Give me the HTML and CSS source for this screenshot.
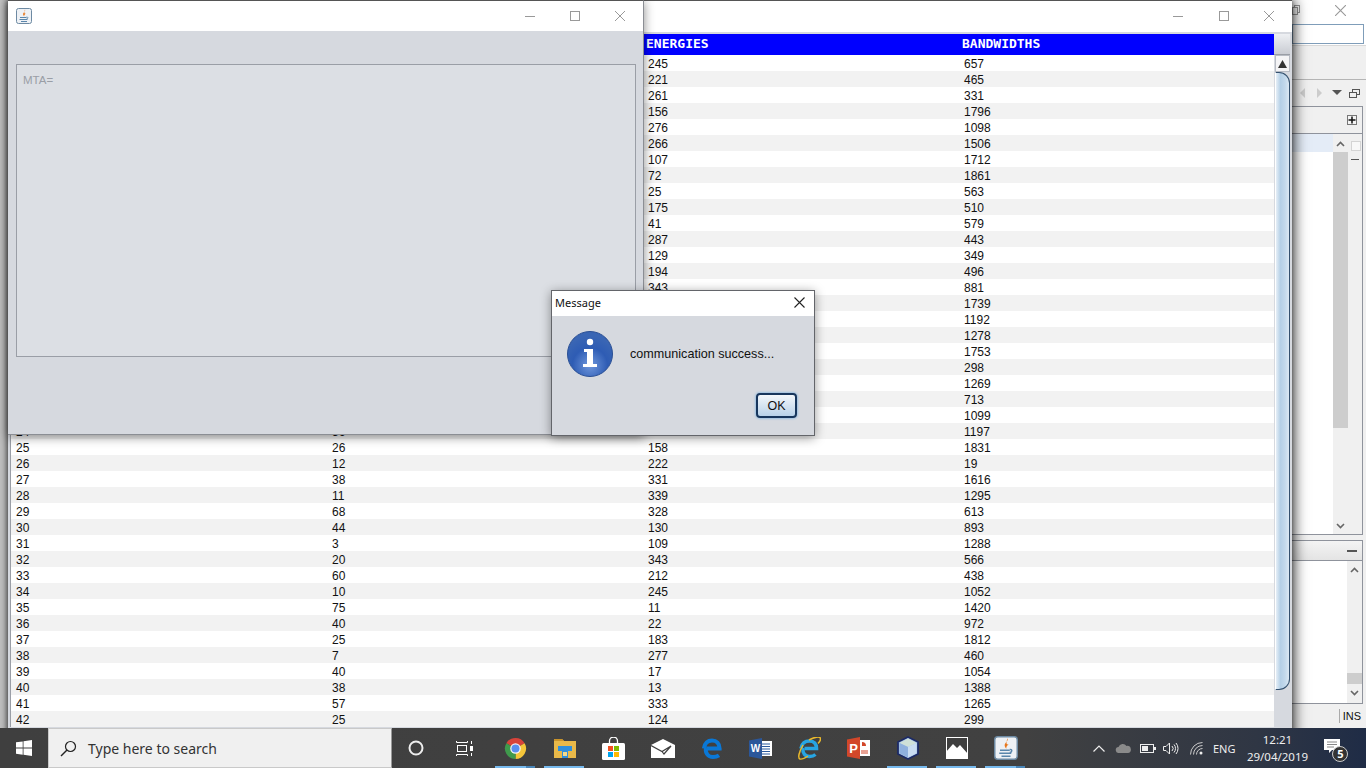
FILE: index.html
```html
<!DOCTYPE html>
<html lang="en">
<head>
    <meta charset="UTF-8">
    <title>communication success</title>
    <link rel="stylesheet" href="styles.css">
</head>
<body>
<svg class="defs" width="0" height="0">
    <symbol id="java" viewBox="0 0 16 16">
        <rect x="0.5" y="0.5" width="15" height="15" rx="2" fill="#eef1f5" stroke="#6d8aa3"/>
        <path d="M9 1.500c1 2-2.500 3-1.800 5.300.2.700.7 1.200 1 1.700-.1-1.300.4-2 1.700-3-1.700.6-2 -.8-.9-4z" fill="#e8781e"/>
        <path d="M4 9.500h6.500M3.500 11.500h8M5 13.500h6" stroke="#5a86ab" stroke-width="1.100" fill="none"/>
        <path d="M10.500 9c1.800-.3 1.800 1.700 0 2" stroke="#5a86ab" fill="none"/>
    </symbol>
    <symbol id="min" viewBox="0 0 10 10"><path d="M0 5.500h10" stroke="#999" fill="none"/></symbol>
    <symbol id="max" viewBox="0 0 10 10"><rect x="0.500" y="0.500" width="9" height="9" stroke="#999" fill="none"/></symbol>
    <symbol id="close" viewBox="0 0 10 10"><path d="M0 0l10 10M10 0L0 10" stroke="#999" fill="none"/></symbol>
    <symbol id="chev-up" viewBox="0 0 9 6"><path d="M1 5l3.500-3.500L8 5" stroke="#666" stroke-width="1.600" fill="none"/></symbol>
    <symbol id="chev-down" viewBox="0 0 9 6"><path d="M1 1l3.500 3.500L8 1" stroke="#666" stroke-width="1.600" fill="none"/></symbol>
</svg>

<div class="desktop">

    <!-- eclipse behind everything -->
    <div class="ide">
        <div class="ide-side">
            <div class="ide-title">
                <svg width="8" height="10" viewBox="0 0 8 10"><rect x="2.500" y="0.500" width="5" height="7" fill="none" stroke="#999"/><rect x="0.500" y="2.500" width="5" height="7" fill="#fff" stroke="#999"/></svg>
                <svg class="ide-close" width="11" height="11"><use href="#close"/></svg>
            </div>
            <div class="ide-search"><div class="search-field"></div></div>
            <div class="ide-tools"></div>
            <div class="ide-viewbar">
                <svg width="74" height="26" viewBox="0 0 74 26">
                    <path d="M13 8v10l-5-5z" fill="#ccc"/>
                    <path d="M25 8v10l5-5z" fill="#ccc"/>
                    <path d="M40 10h10l-5 5z" fill="#555"/>
                    <rect x="60.500" y="9.500" width="7" height="5" fill="none" stroke="#555"/>
                    <rect x="57.500" y="12.500" width="7" height="5" fill="#f0f0f0" stroke="#555"/>
                </svg>
            </div>
            <div class="panel panel-top">
                <div class="panel-head">
                    <svg width="10" height="10" viewBox="0 0 10 10"><rect x="0.500" y="0.500" width="9" height="9" fill="#f4f4f4" stroke="#777"/><path d="M5 1.500v7M1.500 5h7" stroke="#111" stroke-width="1.500"/></svg>
                </div>
                <div class="panel-body">
                    <div class="list"><div class="list-sel"></div></div>
                    <div class="vbar vbar-wide">
                        <svg class="chev" width="9" height="6"><use href="#chev-up"/></svg>
                        <div class="vbar-thumb"></div>
                        <svg class="chev chev-end" width="9" height="6"><use href="#chev-down"/></svg>
                    </div>
                    <div class="rail">
                        <div class="rail-box"></div>
                        <div class="rail-pin"></div>
                    </div>
                </div>
            </div>
            <div class="panel panel-bottom">
                <div class="panel-head panel-head-small"><div class="minus"></div></div>
                <div class="panel-body">
                    <div class="list"></div>
                    <div class="vbar">
                        <svg class="chev" width="9" height="6"><use href="#chev-up"/></svg>
                        <div class="vbar-thumb vbar-thumb-low"></div>
                        <svg class="chev" width="9" height="6"><use href="#chev-down"/></svg>
                    </div>
                </div>
            </div>
            <div class="ide-status"><span class="ins">INS</span></div>
        </div>
    </div>

    <!-- table window -->
    <div class="window table-window">
        <div class="titlebar">
            <div class="title-buttons">
                <svg width="10" height="10"><use href="#min"/></svg>
                <svg width="10" height="10"><use href="#max"/></svg>
                <svg width="10" height="10"><use href="#close"/></svg>
            </div>
        </div>
        <div class="table-body">
            <div class="table-wrap">
                <table class="data">
                    <thead><tr><th></th><th></th><th>ENERGIES</th><th>BANDWIDTHS</th></tr></thead>
                    <tbody>
                        <tr><td>1</td><td></td><td>245</td><td>657</td></tr>
                        <tr><td>2</td><td></td><td>221</td><td>465</td></tr>
                        <tr><td>3</td><td></td><td>261</td><td>331</td></tr>
                        <tr><td>4</td><td></td><td>156</td><td>1796</td></tr>
                        <tr><td>5</td><td></td><td>276</td><td>1098</td></tr>
                        <tr><td>6</td><td></td><td>266</td><td>1506</td></tr>
                        <tr><td>7</td><td></td><td>107</td><td>1712</td></tr>
                        <tr><td>8</td><td></td><td>72</td><td>1861</td></tr>
                        <tr><td>9</td><td></td><td>25</td><td>563</td></tr>
                        <tr><td>10</td><td></td><td>175</td><td>510</td></tr>
                        <tr><td>11</td><td></td><td>41</td><td>579</td></tr>
                        <tr><td>12</td><td></td><td>287</td><td>443</td></tr>
                        <tr><td>13</td><td></td><td>129</td><td>349</td></tr>
                        <tr><td>14</td><td></td><td>194</td><td>496</td></tr>
                        <tr><td>15</td><td></td><td>343</td><td>881</td></tr>
                        <tr><td>16</td><td></td><td></td><td>1739</td></tr>
                        <tr><td>17</td><td></td><td></td><td>1192</td></tr>
                        <tr><td>18</td><td></td><td></td><td>1278</td></tr>
                        <tr><td>19</td><td></td><td></td><td>1753</td></tr>
                        <tr><td>20</td><td></td><td></td><td>298</td></tr>
                        <tr><td>21</td><td></td><td></td><td>1269</td></tr>
                        <tr><td>22</td><td></td><td></td><td>713</td></tr>
                        <tr><td>23</td><td></td><td></td><td>1099</td></tr>
                        <tr><td>24</td><td>36</td><td>207</td><td>1197</td></tr>
                        <tr><td>25</td><td>26</td><td>158</td><td>1831</td></tr>
                        <tr><td>26</td><td>12</td><td>222</td><td>19</td></tr>
                        <tr><td>27</td><td>38</td><td>331</td><td>1616</td></tr>
                        <tr><td>28</td><td>11</td><td>339</td><td>1295</td></tr>
                        <tr><td>29</td><td>68</td><td>328</td><td>613</td></tr>
                        <tr><td>30</td><td>44</td><td>130</td><td>893</td></tr>
                        <tr><td>31</td><td>3</td><td>109</td><td>1288</td></tr>
                        <tr><td>32</td><td>20</td><td>343</td><td>566</td></tr>
                        <tr><td>33</td><td>60</td><td>212</td><td>438</td></tr>
                        <tr><td>34</td><td>10</td><td>245</td><td>1052</td></tr>
                        <tr><td>35</td><td>75</td><td>11</td><td>1420</td></tr>
                        <tr><td>36</td><td>40</td><td>22</td><td>972</td></tr>
                        <tr><td>37</td><td>25</td><td>183</td><td>1812</td></tr>
                        <tr><td>38</td><td>7</td><td>277</td><td>460</td></tr>
                        <tr><td>39</td><td>40</td><td>17</td><td>1054</td></tr>
                        <tr><td>40</td><td>38</td><td>13</td><td>1388</td></tr>
                        <tr><td>41</td><td>57</td><td>333</td><td>1265</td></tr>
                        <tr><td>42</td><td>25</td><td>124</td><td>299</td></tr>
                    </tbody>
                </table>
            </div>
            <div class="scrollcol">
                <div class="scroll-corner"></div>
                <div class="scroll-up"><svg width="9" height="8" viewBox="0 0 9 8"><path d="M4.500 0L9 8H0z" fill="#333"/></svg></div>
                <div class="scroll-thumb"></div>
            </div>
        </div>
    </div>

    <!-- MTA window -->
    <div class="window mta-window">
        <div class="titlebar">
            <svg class="java-icon" width="16" height="16"><use href="#java"/></svg>
            <div class="title-buttons">
                <svg width="10" height="10"><use href="#min"/></svg>
                <svg width="10" height="10"><use href="#max"/></svg>
                <svg width="10" height="10"><use href="#close"/></svg>
            </div>
        </div>
        <div class="mta-body">
            <div class="mta-area">MTA=</div>
        </div>
    </div>

    <!-- message dialog -->
    <div class="dialog">
        <div class="dialog-title">
            <span>Message</span>
            <svg width="11" height="11" viewBox="0 0 11 11"><path d="M.5.5l10 10M10.500.5l-10 10" stroke="#222" stroke-width="1.100" fill="none"/></svg>
        </div>
        <div class="dialog-body">
            <div class="dialog-msg">
                <svg width="46" height="46" viewBox="0 0 46 46">
                    <defs>
                        <radialGradient id="infoBg" cx="50%" cy="75%" r="65%">
                            <stop offset="0" stop-color="#6f97dc"/>
                            <stop offset="0.600" stop-color="#2e5cb4"/>
                            <stop offset="1" stop-color="#3a66b4"/>
                        </radialGradient>
                    </defs>
                    <circle cx="23" cy="23" r="22.500" fill="url(#infoBg)" stroke="#2a4f94"/>
                    <circle cx="23" cy="11" r="3.200" fill="#fff"/>
                    <path d="M17 18h9v15h4v3H16v-3h4V21h-3z" fill="#fff"/>
                </svg>
                <span>communication success...</span>
            </div>
            <div class="dialog-actions"><button class="ok">OK</button></div>
        </div>
    </div>
</div>

<div class="taskbar">
    <div class="start">
        <svg width="16" height="16" viewBox="0 0 16 16"><path d="M0 2.300l6.700-.9v6.200H0zM7.500 1.300L16 0v7.600H7.500zM0 8.400h6.700v6.300L0 13.700zM7.500 8.400H16V16l-8.500-1.200z" fill="#fff"/></svg>
    </div>
    <div class="searchbox">
        <svg width="17" height="17" viewBox="0 0 17 17"><circle cx="10.500" cy="6.500" r="5" fill="none" stroke="#222" stroke-width="1.200"/><path d="M7 10l-6 6" stroke="#222" stroke-width="1.400"/></svg>
        <span>Type here to search</span>
    </div>
    <div class="tb-sys">
        <svg width="16" height="16" viewBox="0 0 16 16"><circle cx="8" cy="8" r="6.500" fill="none" stroke="#eee" stroke-width="2"/></svg>
    </div>
    <div class="tb-sys">
        <svg width="17" height="15" viewBox="0 0 17 15"><path d="M.5 0v1.500h11V0M.5 15v-1.500h11V15M15.500 0v3M15.500 12v3" stroke="#fff" fill="none"/><rect x="1.500" y="4.500" width="9" height="6" fill="none" stroke="#fff"/><rect x="14" y="5" width="3" height="5" fill="#fff"/></svg>
    </div>
    <div class="tb-apps">
        <div class="tb-app running split">
            <svg width="23" height="23" viewBox="0 0 24 24">
                <path d="M12 12L2.470 6.500A11 11 0 0 1 21.530 6.500z" fill="#d8433a"/>
                <path d="M12 12l9.530-5.500A11 11 0 0 1 12 23z" fill="#f5c63a"/>
                <path d="M12 12v11A11 11 0 0 1 2.470 6.500z" fill="#3f9a4c"/>
                <circle cx="12" cy="12" r="5.500" fill="#f4f4f4"/>
                <circle cx="12" cy="12" r="4.200" fill="#5a8ff0"/>
            </svg>
        </div>
        <div class="tb-app running">
            <svg width="22" height="20" viewBox="0 0 22 20">
                <path d="M0 1h8l2 2h12v17H0z" fill="#e9b949"/>
                <path d="M0 1h8l2 2H0z" fill="#c9932a"/>
                <path d="M4 8h14v5h-4v7H8v-7H4z" fill="#2f8fdc"/>
                <rect x="9" y="14" width="4" height="4" fill="#f3d98a"/>
            </svg>
        </div>
        <div class="tb-app">
            <svg width="23" height="23" viewBox="0 0 23 23">
                <path d="M7.500 7V4a4 4 0 0 1 8 0v3" fill="none" stroke="#fff" stroke-width="1.300"/>
                <rect x="0" y="6" width="23" height="17" rx="1.500" fill="#fff"/>
                <rect x="6" y="9" width="5" height="5" fill="#f25022"/>
                <rect x="12" y="9" width="5" height="5" fill="#7fba00"/>
                <rect x="6" y="15" width="5" height="5" fill="#00a4ef"/>
                <rect x="12" y="15" width="5" height="5" fill="#ffb900"/>
            </svg>
        </div>
        <div class="tb-app">
            <svg width="24" height="19" viewBox="0 0 24 19">
                <path d="M0 6L12 0l12 6v13H0z" fill="#fff"/>
                <path d="M0 6.500l11 6L20 7l-7 8-2-2.500" fill="none" stroke="#3f3f3f" stroke-width="1.200"/>
            </svg>
        </div>
        <div class="tb-app">
            <svg width="21" height="21" viewBox="0 0 21 21">
                <path d="M3 10.500C3.500 5 7 2.500 11 2.500c4.500 0 7.500 3 7.500 8H5.500" fill="none" stroke="#0a78d7" stroke-width="4.200"/>
                <path d="M5 10c-1 5 2 9 7 9 2.500 0 4.500-.7 6-1.700" fill="none" stroke="#0a78d7" stroke-width="4"/>
            </svg>
        </div>
        <div class="tb-app">
            <svg width="23" height="21" viewBox="0 0 23 21">
                <rect x="9" y="3" width="14" height="15" fill="#fff"/>
                <path d="M12 6h9M12 8.500h9M12 11h9M12 13.500h9M12 16h9" stroke="#2b5a9e" fill="none"/>
                <path d="M0 2.500L13 0v21L0 18.500z" fill="#2b579a"/>
                <text x="6.500" y="14" class="app-letter">W</text>
            </svg>
        </div>
        <div class="tb-app">
            <svg width="23" height="23" viewBox="0 0 23 23">
                <path d="M3 11.500C3.500 6.500 7 4 11.500 4c4.500 0 7 3 7 7.500H6.500" fill="none" stroke="#27a5e3" stroke-width="3.600"/>
                <path d="M5 11c-.7 5 2 8.500 6.500 8.500 2.500 0 4.500-.7 6-2" fill="none" stroke="#27a5e3" stroke-width="3.400"/>
                <path d="M5 8C1 15-.5 21 2 22c2 .6 5-1 8-3M11 3c5-3 11-4 11.500-1.500.3 1.500-1 3.500-2.500 5" fill="none" stroke="#eab92c" stroke-width="1.500"/>
            </svg>
        </div>
        <div class="tb-app">
            <svg width="23" height="22" viewBox="0 0 23 22">
                <rect x="9" y="3" width="14" height="16" fill="#fff"/>
                <path d="M15 5a4 4 0 0 1 4 4h-4z" fill="#d2472a"/>
                <path d="M14 14h7M14 16h7" stroke="#d2472a" fill="none"/>
                <path d="M0 2.500L13 0v22L0 19.500z" fill="#d2472a"/>
                <text x="6.500" y="15.500" class="app-letter app-letter-big">P</text>
            </svg>
        </div>
        <div class="tb-app running">
            <svg width="22" height="24" viewBox="0 0 22 24">
                <path d="M11 1l10 5v12l-10 5-10-5V6z" fill="#a9c6e8" stroke="#1c2a66" stroke-width="1.800" stroke-linejoin="round"/>
                <path d="M11 2.500L19.500 7 11 11 2.500 7z" fill="#cfe0d8"/>
                <path d="M11 11v10.500l8.500-4.200V7z" fill="#c9dcf2"/>
                <path d="M11 11v10.500l-8.500-4.200V7z" fill="#8fb0de"/>
            </svg>
        </div>
        <div class="tb-app running">
            <svg width="22" height="22" viewBox="0 0 22 22">
                <rect x="0.500" y="0.500" width="21" height="21" fill="#3f3f3f" stroke="#fff"/>
                <path d="M0 22v-7l7-8 4 4 3-3 8 9v5z" fill="#fff"/>
            </svg>
        </div>
        <div class="tb-app running split">
            <svg width="24" height="24"><use href="#java"/></svg>
        </div>
    </div>
    <div class="tray">
        <svg class="tray-chev" width="12" height="7" viewBox="0 0 12 7"><path d="M.5 6.500L6 1l5.500 5.500" stroke="#eee" stroke-width="1.200" fill="none"/></svg>
        <svg class="tray-cloud" width="16" height="10" viewBox="0 0 16 10"><path d="M4 10a3 3 0 0 1-.5-6A4.500 4.500 0 0 1 11.500 3 3.500 3.500 0 0 1 13 10z" fill="#8a8a8a"/></svg>
        <svg class="tray-batt" width="16" height="9" viewBox="0 0 16 9"><rect x="0.500" y="0.500" width="13" height="8" fill="none" stroke="#eee"/><rect x="2" y="2" width="6" height="5" fill="#eee"/><rect x="14" y="3" width="2" height="3" fill="#eee"/></svg>
        <svg class="tray-vol" width="17" height="13" viewBox="0 0 17 13"><path d="M.5 4.500h2.500L6.500 1v11L3 8.500H.5z" fill="none" stroke="#eee"/><path d="M9 4a3.500 3.500 0 0 1 0 5M11 2.500a6 6 0 0 1 0 8M13 1a8.500 8.500 0 0 1 0 11" fill="none" stroke="#eee"/></svg>
        <svg class="tray-wifi" width="14" height="13" viewBox="0 0 14 13"><path d="M.5 12.500a12 12 0 0 1 12-12M3.500 12.500a9 9 0 0 1 9-9M6.500 12.500a6 6 0 0 1 6-6" fill="none" stroke="#ccc"/><circle cx="11" cy="11" r="1.500" fill="#eee"/></svg>
        <span class="lang">ENG</span>
        <div class="clock"><span>12:21</span><span>29/04/2019</span></div>
        <div class="notify">
            <svg width="16" height="15" viewBox="0 0 16 15"><path d="M0 0h16v11H8l-3 3v-3H0z" fill="#fff"/><path d="M3 3h10M3 5.500h10M3 8h7" stroke="#888" fill="none"/></svg>
            <span class="notify-count">5</span>
        </div>
    </div>
</div>
</body>
</html>
```
FILE: styles.css
```css
html, body {
    margin: 0;
    padding: 0;
    width: 1366px;
    height: 768px;
    overflow: hidden;
    font-family: "Liberation Sans", Arial, sans-serif;
    font-size: 12px;
    color: #111;
}
.defs {
    position: absolute;
}
.desktop {
    position: relative;
    height: 728px;
    overflow: hidden;
    background: #c4c4c4;
}

/* windows sit on the desktop at their own place */
.window {
    position: absolute;
    left: 8px;
    top: 0;
    box-sizing: border-box;
    border-top: 1px solid #555;
    background: #d6d9df;
}
.table-window {
    width: 1284px;
    height: 760px;
    box-shadow: 3px 0 12px rgba(0, 0, 0, 0.7), -1px 0 5px rgba(0, 0, 0, 0.5);
}
.mta-window {
    width: 636px;
    height: 435px;
    border-right: 1px solid #8b8e94;
    border-bottom: 1px solid #8b8e94;
    box-shadow: 0 2px 10px rgba(0, 0, 0, 0.45);
}
.titlebar {
    height: 31px;
    box-sizing: border-box;
    background: #fff;
    display: flex;
    align-items: center;
    padding: 0 18px 2px 8px;
}
.mta-window .titlebar {
    height: 30px;
    padding-bottom: 1px;
}
.java-icon {
    display: block;
}
.title-buttons {
    margin-left: auto;
    display: flex;
    gap: 35px;
}
.table-window .title-buttons {
    gap: 35.500px;
}

/* table window */
.table-body {
    display: flex;
    padding: 2px 2px 0 2px;
}
.table-wrap {
    width: 1264px;
    background: #fff;
    border-left: 1px solid #9a9ea6;
    box-sizing: border-box;
}
.data {
    border-collapse: collapse;
    table-layout: fixed;
    width: 1263px;
}
.data th, .data td {
    box-sizing: border-box;
}
.data th {
    height: 21px;
    padding: 0 0 3px 3px;
    background: #0000ff;
    color: #fff;
    font: bold 13px "DejaVu Sans Mono", monospace;
    text-align: left;
}
.data td {
    height: 16px;
    padding: 2px 0 0 5px;
    line-height: 14px;
    color: #111;
}
.data th:nth-child(-n+3), .data td:nth-child(-n+3) {
    width: 316px;
}
.data tbody tr:nth-child(even) td {
    background: #f2f2f2;
}
.scrollcol {
    width: 16px;
    background: #d6d9df;
}
.scroll-corner {
    height: 20px;
    background: linear-gradient(#eef0f3, #c9ccd3);
    border-bottom: 1px solid #9a9ea6;
}
.scroll-up {
    height: 17px;
    margin-left: 1px;
    background: #f4f4f6;
    border: 1px solid #b8bcc4;
    box-sizing: border-box;
    display: flex;
    align-items: center;
    justify-content: center;
}
.scroll-thumb {
    height: 618px;
    margin-left: 1px;
    box-sizing: border-box;
    border: 1px solid #33506e;
    border-left-color: #fff;
    border-radius: 0 11px 11px 0;
    background: linear-gradient(90deg, #e6eff7, #b4cfe6 35%, #c3d9ec 70%, #dbe8f3);
}

/* MTA window */
.mta-body {
    padding: 33px 7px 77px 8px;
}
.mta-area {
    box-sizing: border-box;
    height: 293px;
    padding: 8px 6px;
    border: 1px solid #9a9ea6;
    background: #dcdfe4;
    color: #9a9ea6;
    font-size: 11.500px;
    line-height: 14px;
}

/* message dialog */
.dialog {
    position: absolute;
    left: 551px;
    top: 290px;
    width: 264px;
    height: 146px;
    box-sizing: border-box;
    border: 1px solid #63656a;
    background: #d6d9df;
    box-shadow: 0 2px 10px rgba(0, 0, 0, 0.4);
}
.dialog-title {
    height: 25px;
    box-sizing: border-box;
    background: #fff;
    display: flex;
    align-items: center;
    justify-content: space-between;
    padding: 0 9px 3px 3px;
    font-family: "Noto Sans", sans-serif;
    font-size: 11px;
}
.dialog-body {
    padding: 15px 17px 0 15px;
}
.dialog-msg {
    display: flex;
    align-items: center;
    gap: 17px;
    font-size: 12.600px;
}
.dialog-msg svg {
    display: block;
}
.dialog-actions {
    display: flex;
    justify-content: flex-end;
    margin-top: 16px;
}
.ok {
    width: 41px;
    height: 25px;
    padding: 0;
    border: 2px solid #17365d;
    border-radius: 4px;
    background: linear-gradient(#f3f7fb, #b9d2e9);
    box-shadow: 0 0 2px 1px #9cc0e0;
    font: 12.500px "Liberation Sans", Arial, sans-serif;
    color: #111;
}

/* eclipse on the right */
.ide {
    position: absolute;
    inset: 0;
    display: flex;
    justify-content: flex-end;
}
.ide-side {
    width: 74px;
    height: 728px;
    display: flex;
    flex-direction: column;
    background: #f0f0f0;
}
.ide-title {
    height: 24px;
    box-sizing: border-box;
    background: #fff;
    display: flex;
    align-items: center;
    justify-content: space-between;
    padding: 0 20px 4px 0;
}
.ide-search {
    height: 22px;
    background: #fff;
    padding-right: 2px;
    border-bottom: 1px solid #d8d8d8;
    box-sizing: border-box;
}
.search-field {
    height: 20px;
    box-sizing: border-box;
    border: 1px solid #7f9db9;
    background: #fff;
}
.ide-tools {
    height: 34px;
    box-sizing: border-box;
    border-bottom: 1px solid #b5b5b5;
}
.ide-viewbar {
    height: 26px;
}
.ide-viewbar svg {
    display: block;
}
.panel {
    margin-right: 3px;
    box-sizing: border-box;
    border: 1px solid #8f939c;
    border-left: 0;
    display: flex;
    flex-direction: column;
}
.panel-top {
    height: 429px;
}
.panel-bottom {
    height: 164px;
    margin-top: 5px;
}
.panel-head {
    height: 27px;
    flex: none;
    box-sizing: border-box;
    display: flex;
    align-items: center;
    justify-content: flex-end;
    padding-right: 5px;
    border-bottom: 1px solid #8f939c;
    background: #f0f0f0;
}
.panel-head-small {
    height: 20px;
    background: linear-gradient(#f4f4f4, #e4e4e4);
}
.minus {
    width: 10px;
    height: 2px;
    background: #555;
}
.panel-body {
    flex: 1;
    display: flex;
    min-height: 0;
}
.list {
    flex: 1;
    background: #fff;
}
.list-sel {
    height: 18px;
    background: #e4ecf7;
}
.vbar {
    width: 15px;
    background: #f0f0f0;
    display: flex;
    flex-direction: column;
    align-items: center;
    padding-top: 6px;
    box-sizing: border-box;
}
.vbar-wide {
    padding-top: 7px;
}
.chev {
    flex: none;
    display: block;
}
.vbar-thumb {
    width: 100%;
    height: 276px;
    margin-top: 5px;
    background: #cdcdcd;
}
.vbar-thumb-low {
    height: 11px;
    margin-top: 100px;
    margin-bottom: 6px;
}
.chev-end {
    margin-top: 95px;
}
.rail {
    width: 14px;
    padding: 7px 0 0 3px;
    box-sizing: border-box;
    background: #f0f0f0;
}
.rail-box {
    width: 8px;
    height: 8px;
    border: 1px solid #d4d4d4;
    background: #f8f8f8;
}
.rail-pin {
    width: 8px;
    height: 1px;
    margin-top: 8px;
    background: #555;
}
.ide-status {
    flex: 1;
    display: flex;
    align-items: center;
    justify-content: flex-end;
    padding-right: 5px;
}
.ins {
    padding-left: 3px;
    border-left: 1px solid #aaa;
    line-height: 14px;
    font-size: 11px;
    color: #111;
}

/* taskbar */
.taskbar {
    height: 40px;
    display: flex;
    align-items: stretch;
    background: linear-gradient(90deg, #3f3f3f, #414141 75%, #2f3644 92%, #1f2c46);
    color: #eee;
}
.start {
    width: 48px;
    display: flex;
    align-items: center;
    justify-content: center;
}
.searchbox {
    width: 344px;
    box-sizing: border-box;
    display: flex;
    align-items: center;
    gap: 11px;
    padding-left: 11px;
    background: #f0f0f0;
    border: 1px solid #c9c9c9;
    border-right-color: #999;
    color: #333;
    font: 14px "Noto Sans", sans-serif;
}
.tb-sys {
    width: 48px;
    display: flex;
    align-items: center;
    justify-content: center;
}
.tb-apps {
    display: flex;
    margin-left: 3px;
}
.tb-app {
    position: relative;
    width: 49px;
    display: flex;
    align-items: center;
    justify-content: center;
}
.tb-app.running::after {
    content: "";
    position: absolute;
    left: 4px;
    right: 5px;
    bottom: 0;
    height: 2px;
    background: #76b9ed;
}
.tb-app.split::before {
    content: "";
    position: absolute;
    right: 5px;
    bottom: 0;
    width: 9px;
    height: 2px;
    background: #4a86b8;
    z-index: 1;
}
.app-letter {
    fill: #fff;
    font: bold 10px "Liberation Sans", Arial, sans-serif;
    text-anchor: middle;
}
.app-letter-big {
    font-size: 13px;
}
.tray {
    flex: 1;
    display: flex;
    align-items: center;
    padding-left: 63px;
}
.tray-cloud { margin-left: 10px; }
.tray-batt { margin-left: 9px; }
.tray-vol { margin-left: 7px; }
.tray-wifi { margin-left: 10px; }
.lang {
    margin-left: 9px;
    font: 11px "Noto Sans", sans-serif;
}
.clock {
    width: 80px;
    margin-left: 2px;
    display: flex;
    flex-direction: column;
    align-items: center;
    gap: 4px;
    font: 11.500px/13px "Noto Sans", sans-serif;
}
.notify {
    position: relative;
    margin-left: 7px;
    display: flex;
    margin-top: -3px;
}
.notify-count {
    position: absolute;
    left: 8px;
    top: 7px;
    width: 14px;
    height: 14px;
    border: 1px solid #ccc;
    border-radius: 50%;
    background: #333;
    color: #fff;
    font: bold 11px/14px "Noto Sans", sans-serif;
    text-align: center;
}
```
